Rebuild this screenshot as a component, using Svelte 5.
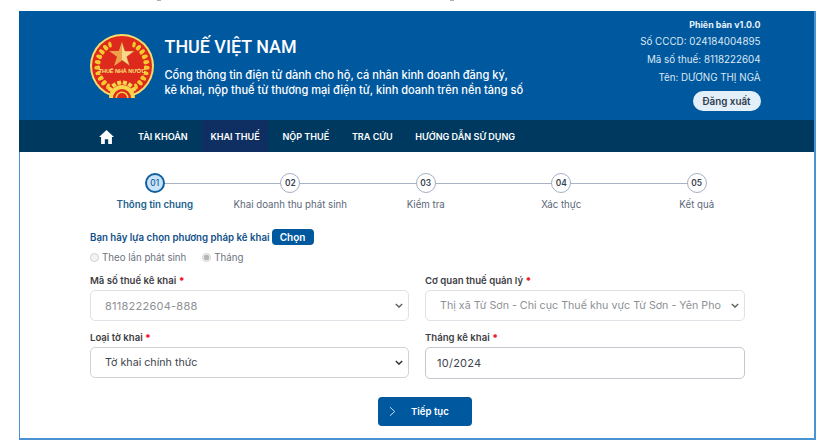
<script>
  const nav = ['TÀI KHOẢN', 'KHAI THUẾ', 'NỘP THUẾ', 'TRA CỨU', 'HƯỚNG DẪN SỬ DỤNG'];
  const steps = [
    ['01', 'Thông tin chung'],
    ['02', 'Khai doanh thu phát sinh'],
    ['03', 'Kiểm tra'],
    ['04', 'Xác thực'],
    ['05', 'Kết quả']
  ];
  const wheat = [0, 1, 2, 3, 4, 5, 6, 7, 8];
  const teeth = [-60, -36, -12, 12, 36, 60];
</script>

<div class="page">
  <i class="speck a"></i>
  <i class="speck b"></i>
  <div class="frame">
    <header class="top">
      <svg class="logo" viewBox="0 0 64 64" aria-hidden="true">
        <circle cx="32" cy="32" r="32" fill="#f6dc6a" />
        <circle cx="32" cy="32" r="30" fill="#dd2a1c" />
        {#each wheat as i}
          <g transform="translate(32 32) rotate({-138 + i * 13})">
            <ellipse cx="-3.2" cy="-24.5" rx="1.7" ry="3" fill="#f7c92f" transform="rotate(-22 -3.2 -24.5)" />
            <ellipse cx="2" cy="-24.5" rx="1.7" ry="3" fill="#f7c92f" transform="rotate(22 2 -24.5)" />
          </g>
          <g transform="translate(32 32) rotate({138 - i * 13})">
            <ellipse cx="-2" cy="-24.5" rx="1.7" ry="3" fill="#f7c92f" transform="rotate(-22 -2 -24.5)" />
            <ellipse cx="3.2" cy="-24.5" rx="1.7" ry="3" fill="#f7c92f" transform="rotate(22 3.2 -24.5)" />
          </g>
        {/each}
        <polygon points="32,8 35,17 44.5,17 36.8,22.7 39.7,31.8 32,26.2 24.3,31.8 27.2,22.7 19.5,17 29,17" fill="#f8d98a" stroke="#c9461f" stroke-width="0.5" />
        <polygon points="32,8 32,26.2 24.3,31.8 27.2,22.7 19.5,17 29,17" fill="#eea14a" />
        <rect x="10" y="32.5" width="44" height="7.5" fill="#dd2a1c" />
        <text x="32" y="38.6" text-anchor="middle" class="logotext">THUẾ NHÀ NƯỚC</text>
        <g transform="translate(32 62)">
          {#each teeth as t}
            <rect x="-2" y="-15.5" width="4" height="4" fill="#f7d64c" transform="rotate({t})" />
          {/each}
          <path d="M-13 2 A13 13 0 0 1 13 2 Z" fill="#f7d64c" />
          <path d="M-9 2 A9 9 0 0 1 9 2 Z" fill="#dd2a1c" />
          <path d="M-6.5 2 A6.5 6.5 0 0 1 6.5 2 Z" fill="#f7d64c" />
          <path d="M-5 2 A5 5 0 0 1 5 2 Z" fill="#dd2a1c" />
        </g>
      </svg>
      <div class="brand">
        <h1>THUẾ VIỆT NAM</h1>
        <p>Cổng thông tin điện tử dành cho hộ, cá nhân kinh doanh đăng ký,<br />kê khai, nộp thuế từ thương mại điện tử, kinh doanh trên nền tảng số</p>
      </div>
      <div class="user">
        <strong>Phiên bản v1.0.0</strong>
        <span>Số CCCD: 024184004895</span>
        <span>Mã số thuế: 8118222604</span>
        <span>Tên: DƯƠNG THỊ NGÀ</span>
        <button class="logout">Đăng xuất</button>
      </div>
    </header>

    <nav class="nav">
      <svg class="home" viewBox="0 0 16 15" aria-hidden="true">
        <path d="M8 0 L16 7.6 L13.8 7.6 L13.8 15 L9.8 15 L9.8 10 L6.2 10 L6.2 15 L2.2 15 L2.2 7.6 L0 7.6 Z" fill="#fff" />
      </svg>
      {#each nav as item, i}
        <span class="item" class:active={i === 1}>{item}</span>
      {/each}
    </nav>

    <main class="body">
      <div class="steps">
        {#each steps as s, i}
          <div class="step" class:current={i === 0}>
            <div class="dot">{s[0]}</div>
            <div class="label">{s[1]}</div>
          </div>
        {/each}
      </div>

      <div class="method">
        <span>Bạn hãy lựa chọn phương pháp kê khai</span>
        <button class="pick">Chọn</button>
      </div>
      <div class="radios">
        <span class="radio"><i></i>Theo lần phát sinh</span>
        <span class="radio on"><i></i>Tháng</span>
      </div>

      <div class="grid">
        <div class="field">
          <span class="flabel">Mã số thuế kê khai <b>*</b></span>
          <div class="control off digits">8118222604-888<svg viewBox="0 0 10 6"><path d="M1 1 L5 5 L9 1" /></svg></div>
        </div>
        <div class="field">
          <span class="flabel">Cơ quan thuế quản lý <b>*</b></span>
          <div class="control off">Thị xã Từ Sơn - Chi cục Thuế khu vực Từ Sơn - Yên Pho<svg viewBox="0 0 10 6"><path d="M1 1 L5 5 L9 1" /></svg></div>
        </div>
        <div class="field">
          <span class="flabel">Loại tờ khai <b>*</b></span>
          <div class="control">Tờ khai chính thức<svg viewBox="0 0 10 6"><path d="M1 1 L5 5 L9 1" /></svg></div>
        </div>
        <div class="field">
          <span class="flabel">Tháng kê khai <b>*</b></span>
          <div class="control date digits">10/2024</div>
        </div>
      </div>

      <div class="actions">
        <button class="next">
          <svg viewBox="0 0 8 12" aria-hidden="true"><path d="M1 1 L6.5 6 L1 11" /></svg>
          <span>Tiếp tục</span>
        </button>
      </div>
    </main>
  </div>
</div>

<style>
  :global(body) {
    margin: 0;
    background: #fff;
  }
  .page {
    position: relative;
    width: 830px;
    height: 445px;
    padding: 11px 0 0 19px;
    box-sizing: border-box;
    overflow: hidden;
    font-family: Inter, "Noto Sans", sans-serif;
    color: #3a3f47;
  }
  .speck {
    position: absolute;
    top: 0;
    width: 4px;
    height: 1px;
    background: #b5aca6;
  }
  .speck.a {
    left: 157px;
  }
  .speck.b {
    left: 450px;
  }
  .frame {
    width: 797px;
    height: 429px;
    box-sizing: border-box;
    border: solid #4a93d2;
    border-width: 0 2px 2px 1.5px;
    display: flex;
    flex-direction: column;
    background: #fff;
  }
  .top {
    height: 109px;
    flex: none;
    margin-left: -1.5px;
    background: #00589f;
    display: flex;
    align-items: flex-start;
    color: #fff;
    box-sizing: border-box;
    padding-left: 71px;
  }
  .logo {
    width: 64px;
    height: 64px;
    margin-top: 23px;
    flex: none;
  }
  .logotext {
    font: 700 5.6px "Liberation Sans", sans-serif;
    fill: #f9e27a;
    letter-spacing: -0.1px;
  }
  .brand {
    margin-left: 11px;
    padding-top: 25px;
    width: 404px;
    flex: none;
  }
  .brand h1 {
    margin: 0;
    font-family: Roboto, Inter, sans-serif;
    font-size: 17.9px;
    line-height: 22px;
    font-weight: 500;
  }
  .brand p {
    margin: 10px 0 0;
    font-size: 11.05px;
    line-height: 14.5px;
    font-weight: 500;
    white-space: nowrap;
  }
  .user {
    flex: none;
    width: 192px;
    padding-top: 7px;
    display: flex;
    flex-direction: column;
    align-items: flex-end;
    font-size: 9.8px;
    color: #dbe8f3;
  }
  .user strong {
    font-weight: 700;
    font-size: 8.9px;
    line-height: 13px;
    color: #e8f2fa;
  }
  .user span {
    line-height: 18px;
    white-space: nowrap;
  }
  .user span:nth-of-type(1) {
    margin-top: 2px;
  }
  .logout {
    margin-top: 4px;
    width: 68px;
    height: 20px;
    border: 0;
    border-radius: 10px;
    background: #e3f0fa;
    color: #2e3b4a;
    font: 600 9.8px Inter, sans-serif;
    padding: 0;
  }
  .nav {
    height: 32px;
    flex: none;
    margin-left: -1.5px;
    background: #00395f;
    display: flex;
    align-items: stretch;
    color: #fff;
    padding-left: 80px;
    box-sizing: border-box;
    font-size: 9.05px;
    font-weight: 600;
  }
  .home {
    width: 15px;
    height: 14px;
    align-self: center;
    margin-right: 16px;
    margin-top: 2px;
  }
  .item {
    display: flex;
    align-items: center;
    padding: 0 8.5px;
    margin-right: 5.7px;
    white-space: nowrap;
  }
  .item.active {
    background: #0f2f63;
  }
  .body {
    flex: 1;
    padding: 21px 0 0 70px;
    box-sizing: border-box;
    width: 100%;
  }
  .steps {
    display: grid;
    grid-template-columns: repeat(5, 135.5px);
    margin-left: -3px;
    width: 677.5px;
  }
  .step {
    position: relative;
    display: flex;
    flex-direction: column;
    align-items: center;
  }
  .step:not(:last-child)::after {
    content: '';
    position: absolute;
    left: 50%;
    top: 9.5px;
    width: 100%;
    height: 1px;
    background: #a9b4c4;
  }
  .dot {
    position: relative;
    z-index: 1;
    width: 20px;
    height: 20px;
    box-sizing: border-box;
    border: 1.5px solid #a3afc2;
    border-radius: 50%;
    background: #fff;
    display: flex;
    align-items: center;
    justify-content: center;
    font-size: 8.4px;
    font-weight: 600;
    color: #39424e;
  }
  .label {
    margin-top: 6px;
    font-size: 9.7px;
    line-height: 12px;
    color: #5c6878;
    white-space: nowrap;
  }
  .current .dot {
    border: 2px solid #10609f;
    background: #c9e3fa;
    color: #1a5f98;
    font-weight: 500;
  }
  .current .label {
    color: #20618f;
    font-weight: 600;
  }
  .method {
    margin-top: 18px;
    display: flex;
    align-items: center;
    gap: 2px;
    font-size: 9.7px;
    font-weight: 600;
    color: #12508a;
    white-space: nowrap;
  }
  .pick {
    width: 42px;
    height: 16px;
    border: 0;
    border-radius: 4px;
    background: #00589f;
    color: #fff;
    font: 600 10px Inter, sans-serif;
    padding: 0;
  }
  .radios {
    margin-top: 6px;
    display: flex;
    gap: 16px;
    font-size: 9.7px;
    color: #6c7480;
    height: 12px;
    align-items: center;
  }
  .radio {
    display: flex;
    align-items: center;
    gap: 3px;
  }
  .radio i {
    width: 9px;
    height: 9px;
    box-sizing: border-box;
    border: 1px solid #d0d0d0;
    border-radius: 50%;
    background: #f4f4f4;
  }
  .radio.on i {
    background: radial-gradient(circle, #b5b5b5 0 2.5px, #efefef 3px);
  }
  .grid {
    margin-top: 12px;
    display: grid;
    grid-template-columns: 319px 320px;
    column-gap: 16px;
    row-gap: 11px;
  }
  .field {
    display: flex;
    flex-direction: column;
    gap: 3px;
  }
  .flabel {
    font-size: 9.6px;
    line-height: 12px;
    font-weight: 600;
    color: #3f3f46;
  }
  .flabel b {
    color: #f0182a;
  }
  .control {
    height: 31px;
    box-sizing: border-box;
    border: 1px solid #cfd3d8;
    border-radius: 5px;
    background: #fff;
    display: flex;
    align-items: center;
    justify-content: space-between;
    padding: 0 4px 0 14px;
    font-size: 10.7px;
    color: #3d444d;
    white-space: nowrap;
  }
  .digits {
    font-size: 11px;
    letter-spacing: 0.25px;
  }
  .control svg {
    width: 8px;
    height: 5px;
    flex: none;
    margin-right: 1px;
    fill: none;
    stroke: #333;
    stroke-width: 1.8;
  }
  .control.off {
    border-color: #dfe2e6;
    color: #8d9196;
  }
  .control.off svg {
    stroke: #666;
  }
  .date {
    height: 32px;
    padding-left: 11px;
    border-color: #c3c8ce;
  }
  .actions {
    margin-top: 18px;
    display: flex;
    justify-content: flex-start;
    padding-left: 288px;
  }
  .next {
    width: 94px;
    height: 29px;
    border: 0;
    border-radius: 4px;
    background: #00589f;
    color: #fff;
    display: flex;
    align-items: center;
    padding: 0 0 0 11px;
    gap: 15px;
    font: 600 9.6px Inter, sans-serif;
  }
  .next svg {
    width: 7px;
    height: 11px;
    fill: none;
    stroke: #cfe2f2;
    stroke-width: 1.1;
  }
</style>
